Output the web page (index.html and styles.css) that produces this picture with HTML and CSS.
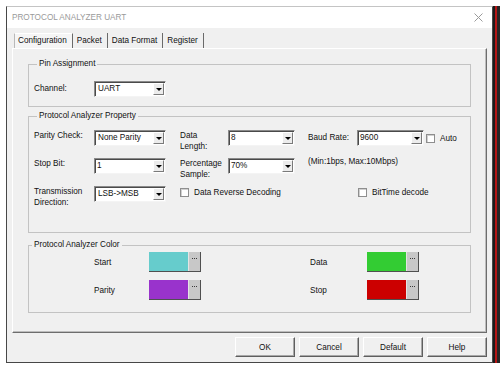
FILE: index.html
```html
<!DOCTYPE html>
<html lang="en">
  <head>
    <meta charset="UTF-8" />
    <title>PROTOCOL ANALYZER UART</title>
    <link rel="stylesheet" href="styles.css">
  </head>
  <body>
    <div class="screen">
      <div class="window">
        <div class="titlebar">
          <span class="title">PROTOCOL ANALYZER UART</span>
          <svg class="close" width="9" height="9" viewBox="0 0 9 9">
            <path d="M0.5 0.5L8.5 8.5M8.5 0.5L0.5 8.5" stroke="#9a9a9a" stroke-width="1" fill="none"/>
          </svg>
        </div>
        <div class="client">
          <div class="tabs">
            <div class="tab active">Configuration</div>
            <div class="tab">Packet</div>
            <div class="tab">Data Format</div>
            <div class="tab">Register</div>
          </div>

          <div class="panel">
            <!-- pin assignment -->
            <div class="group pin">
              <div class="legend">Pin Assignment</div>
              <div class="pin-row">
                <span class="label">Channel:</span>
                <div class="combo"><span class="val">UART</span><span class="drop"></span></div>
              </div>
            </div>

            <!-- property -->
            <div class="group prop">
              <div class="legend">Protocol Analyzer Property</div>
              <div class="prop-grid">
                <span class="label">Parity Check:</span>
                <div class="combo"><span class="val">None Parity</span><span class="drop"></span></div>
                <span class="label col-mid">Data<br>Length:</span>
                <div class="combo edit"><span class="val">8</span><span class="drop"></span></div>
                <span class="label col-right">Baud Rate:</span>
                <div class="combo edit"><span class="val">9600</span><span class="drop"></span></div>
                <label class="check auto"><span class="box"></span>Auto</label>

                <span class="label">Stop Bit:</span>
                <div class="combo edit"><span class="val">1</span><span class="drop"></span></div>
                <span class="label col-mid">Percentage<br>Sample:</span>
                <div class="combo edit"><span class="val">70%</span><span class="drop"></span></div>
                <span class="note">(Min:1bps, Max:10Mbps)</span>

                <span class="label">Transmission<br>Direction:</span>
                <div class="combo"><span class="val">LSB-&gt;MSB</span><span class="drop"></span></div>
                <label class="check reverse"><span class="box"></span>Data Reverse Decoding</label>
                <label class="check bittime"><span class="box"></span>BitTime decode</label>
              </div>
            </div>

            <!-- colors -->
            <div class="group color">
              <div class="legend">Protocol Analyzer Color</div>
              <div class="color-grid">
                <span class="clabel">Start</span>
                <div class="swatch"><span class="fill start"></span><span class="more"></span></div>
                <span></span>
                <span class="clabel">Data</span>
                <div class="swatch"><span class="fill data"></span><span class="more"></span></div>

                <span class="clabel">Parity</span>
                <div class="swatch"><span class="fill parity"></span><span class="more"></span></div>
                <span></span>
                <span class="clabel">Stop</span>
                <div class="swatch"><span class="fill stop"></span><span class="more"></span></div>
              </div>
            </div>
          </div>

          <div class="buttons">
            <div class="btn">OK</div>
            <div class="btn">Cancel</div>
            <div class="btn">Default</div>
            <div class="btn">Help</div>
          </div>
        </div>
      </div>
      <div class="backdrop"></div>
    </div>
  </body>
</html>
```

FILE: styles.css
```css
html,
body {
  margin: 0;
  height: 368px;
  overflow: hidden;
}
body {
  background: #fff;
  font-family: "Liberation Sans", Arial, sans-serif;
  font-size: 8.2px;
  color: #111;
}
* {
  box-sizing: border-box;
}
.screen {
  display: flex;
  align-items: flex-start;
  padding: 6px 0 0 6px;
}
.window {
  width: 487px;
  height: 357px;
  display: flex;
  flex-direction: column;
  border: 1px solid #474747;
  border-top-color: #c4c4c4;
}
.backdrop {
  width: 7px;
  height: 357px;
  background: linear-gradient(to right, #1c1c1c 0 2px, #b51616 2px 4px, #262626 4px);
}
/* title bar */
.titlebar {
  height: 21px;
  background: #fff;
  display: flex;
  align-items: center;
  justify-content: space-between;
  padding: 0 9px 0 5px;
}
.title {
  color: #9a9a9a;
}
.close {
  display: block;
}
/* client */
.client {
  flex: 1;
  background: #f0f0f0;
  padding: 5px 5px 0;
}
.tabs {
  display: flex;
  height: 15px;
  margin-left: 2px;
}
.tab {
  padding: 2px 5px 0 4px;
  line-height: 12px;
  border-right: 1px solid #6a6a6a;
}
.tab.active {
  padding: 1px 5px 0 3px;
  background: #f5f5f5;
  border-top: 1px solid #fff;
  border-left: 1px solid #b9b9b9;
}
.panel {
  width: 475px;
  height: 285px;
  border: 1px solid;
  border-color: #fff #6d6d6d #6d6d6d #fff;
  box-shadow: inset -1px -1px #bdbdbd;
  padding-left: 15px;
}
/* group boxes */
.group {
  width: 443px;
  border: 1px solid #c3c3c3;
}
.legend {
  display: table;
  margin: -6px 0 0 3px;
  padding: 0 2px;
  line-height: 10px;
  background: #f0f0f0;
}
.pin {
  margin-top: 15px;
  padding: 0 0 9px 5px;
}
.pin-row {
  display: flex;
  align-items: center;
  height: 16px;
  margin-top: 12px;
}
.pin-row .label {
  width: 60px;
}
.pin-row .combo {
  width: 72px;
  flex: none;
}
.prop {
  margin-top: 9px;
  padding: 0 0 30px 5px;
}
.prop-grid {
  display: grid;
  grid-template-columns: 60px 72px 62px 67px 62px 67px 1fr;
  grid-template-rows: 16px 16px 16px;
  row-gap: 12px;
  margin-top: 9px;
}
.label {
  line-height: 10.5px;
  padding-top: 1px;
  white-space: nowrap;
}
.col-mid {
  padding-left: 14px;
}
.col-right {
  padding-left: 13px;
  padding-top: 3px;
}
.note {
  grid-column: 5 / span 3;
  padding-left: 13px;
  line-height: 8px;
  white-space: nowrap;
}
/* combo box */
.combo {
  display: flex;
  height: 16px;
  background: #fff;
  border: 1px solid;
  border-color: #8a8a8a #f4f4f4 #f4f4f4 #8a8a8a;
  box-shadow: inset 1px 1px #4a4a4a;
  padding: 1px;
}
.combo .val {
  flex: 1;
  padding-left: 2px;
  line-height: 12px;
  white-space: nowrap;
}
.combo.edit .val {
  padding-left: 1px;
}
.drop {
  width: 11px;
  display: flex;
  align-items: center;
  justify-content: center;
  background: #ececec;
  border: 1px solid;
  border-color: #fff #7a7a7a #7a7a7a #fff;
}
.drop::after {
  content: '';
  border-top: 3px solid #000;
  border-left: 3px solid transparent;
  border-right: 3px solid transparent;
}
/* check boxes */
.check {
  display: flex;
  align-items: center;
  gap: 5px;
  white-space: nowrap;
}
.box {
  width: 9px;
  height: 9px;
  background: #fff;
  border: 1px solid #8e8e8e;
  box-shadow: inset 1px 1px #d0d0d0;
}
.auto {
  margin-left: 2px;
}
.reverse {
  grid-column: 3 / span 3;
  align-self: start;
  padding: 2px 0 0 14px;
}
.bittime {
  grid-column: 6 / span 2;
  align-self: start;
  padding: 2px 0 0 1px;
}
/* colors */
.color {
  margin-top: 12px;
  padding: 0 0 12px 0;
}
.color-grid {
  display: grid;
  grid-template-columns: 55px 52px 109px 57px 52px;
  grid-template-rows: 20px 20px;
  row-gap: 8px;
  margin: 2px 0 0 65px;
  align-items: center;
}
.swatch {
  display: flex;
  height: 20px;
  border-right: 1px solid #505050;
  border-bottom: 1px solid #505050;
}
.fill {
  flex: 1;
}
.fill.start {
  background: #66cccc;
}
.fill.data {
  background: #33cc33;
}
.fill.parity {
  background: #9933cc;
}
.fill.stop {
  background: #cc0000;
}
.more {
  width: 12px;
  display: flex;
  justify-content: center;
  padding-top: 6px;
  background: #c8c8c8;
  border-left: 1px solid #e4e4e4;
}
/* the "..." dots */
.more::after {
  content: '';
  width: 1px;
  height: 1px;
  margin-right: 4px;
  background: #3a3a3a;
  box-shadow: 2px 0 #3a3a3a, 4px 0 #3a3a3a;
}
/* buttons */
.buttons {
  display: flex;
  justify-content: flex-end;
  gap: 4px;
  margin-top: 4px;
}
.btn {
  width: 60px;
  height: 20px;
  display: flex;
  align-items: center;
  justify-content: center;
  background: #f0f0f0;
  border: 1px solid;
  border-color: #fff #5f5f5f #5f5f5f #fff;
  box-shadow: inset -1px -1px #a8a8a8;
}
```
